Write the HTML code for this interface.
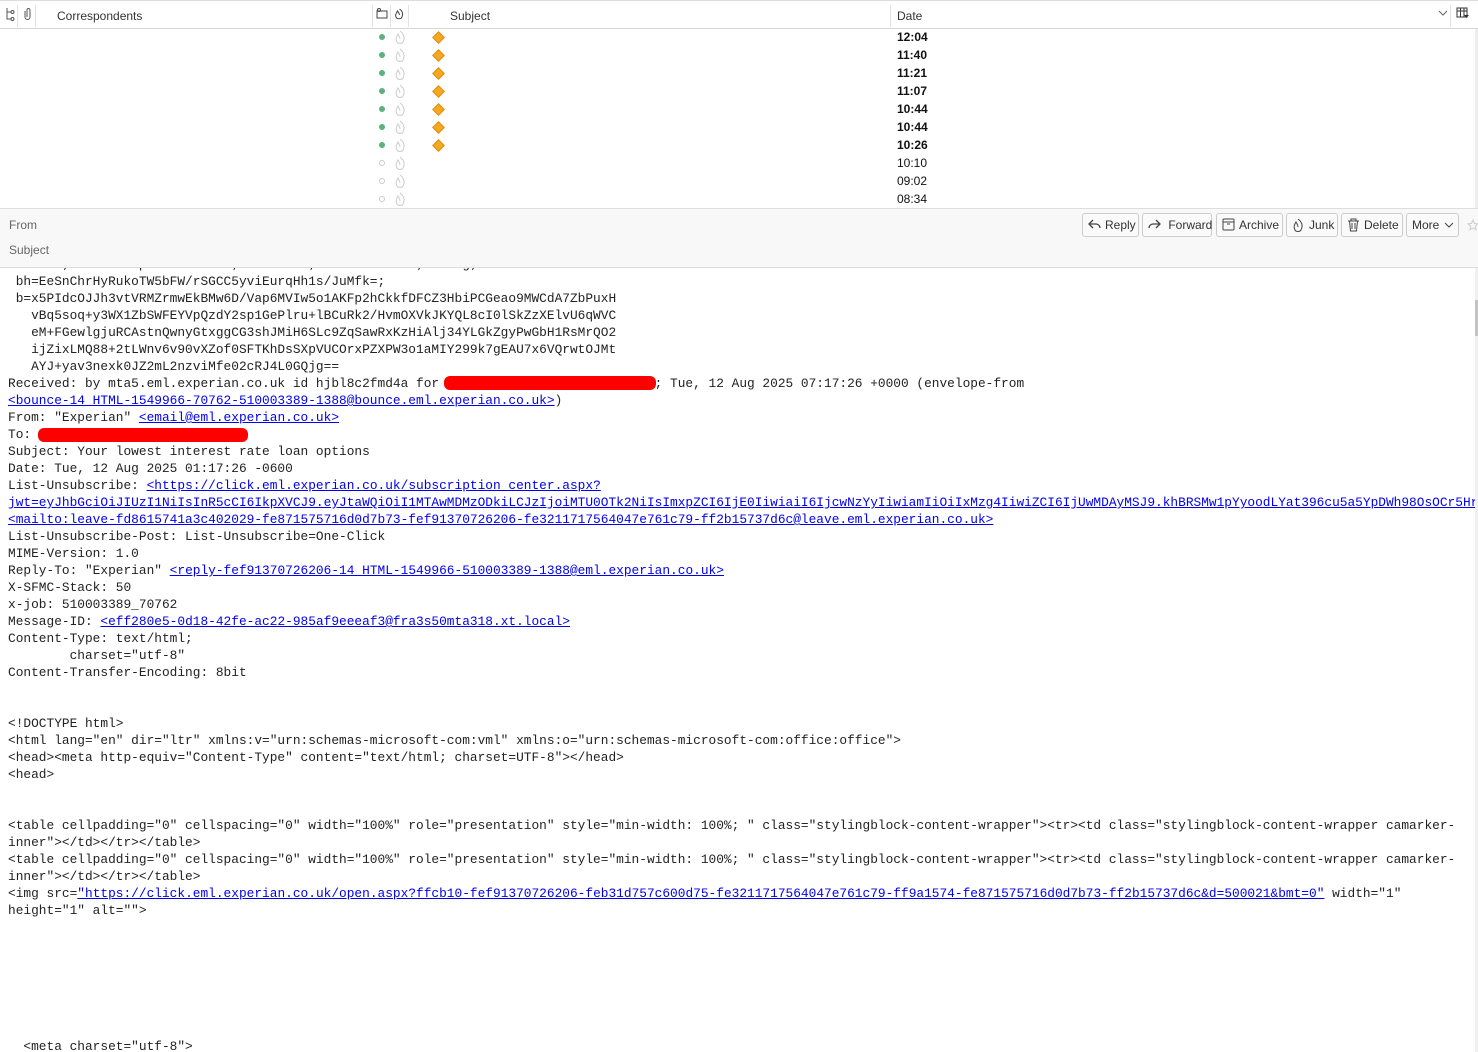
<!DOCTYPE html>
<html><head><meta charset="utf-8"><style>
*{margin:0;padding:0;box-sizing:border-box}
body{width:1478px;height:1052px;overflow:hidden;background:#fff;position:relative;font-family:"Segoe UI","Liberation Sans",sans-serif;}
.hdr{position:absolute;left:0;top:0;width:1478px;height:29px;border-top:1px solid #ddd;border-bottom:1px solid #d6d6d6;background:#fff;font-size:12px;color:#333}
.hdr span{position:absolute;top:8px}
.sep{position:absolute;top:4px;width:1px;height:22px;background:#e2e2e2}
.row{position:absolute;left:0;width:1475px;height:18px}
.dot{position:absolute;left:379px;top:5px;width:6px;height:6px;border-radius:50%;background:#5cb27a}
.dot.g{background:none;border:1px solid #ccc}
.fl{position:absolute;left:394px;top:1px}
.star{position:absolute;left:434px;top:4px;width:9px;height:9px;background:#f6a821;transform:rotate(45deg);border:1px solid #e48a10}
.time{position:absolute;left:897px;top:1px;font-size:12px;color:#111}
.b{font-weight:bold}
.ph{position:absolute;left:0;top:208px;width:1478px;height:60px;background:#f8f8f8;border-top:1px solid #ddd;border-bottom:1px solid #ddd;font-size:12px;color:#666}
.btn{position:absolute;top:4px;height:24px;border:1px solid #ccc;border-radius:3px;background:#fafafa;font-size:12px;color:#333;line-height:22px;padding-left:22px}
.btn svg{position:absolute;left:5px;top:4px}
pre{position:absolute;left:8px;top:254px;font-family:"Liberation Mono",monospace;font-size:12.83px;line-height:17px;color:#222;white-space:pre}
.bodyclip{position:absolute;left:0;top:268px;width:1475px;height:784px;overflow:hidden}
a{color:#0000ee;text-decoration:underline}
.red{position:absolute;background:#f00;border-radius:6px}
</style></head><body>
<div class="hdr">
<span style="left:5px;top:6px"><svg width="10" height="14"><path d="M2 1v11h4M2 5h4" stroke="#555" fill="none"/><circle cx="7.5" cy="5" r="1.5" fill="none" stroke="#555"/><circle cx="7.5" cy="12" r="1.5" fill="none" stroke="#555"/></svg></span>
<div class="sep" style="left:17px"></div>
<span style="left:23px;top:6px"><svg width="9" height="14"><path d="M2 4v6a2.5 2.5 0 0 0 5 0V3a1.5 1.5 0 0 0-3 0v7" stroke="#555" fill="none"/></svg></span>
<div class="sep" style="left:35px"></div>
<span style="left:57px">Correspondents</span>
<div class="sep" style="left:372px"></div>
<span style="left:376px;top:7px"><svg width="12" height="12"><rect x="1" y="3" width="10" height="7" fill="none" stroke="#444"/><circle cx="3" cy="2" r="1.5" fill="none" stroke="#444"/></svg></span>
<div class="sep" style="left:390px"></div>
<span style="left:394px;top:7px"><svg width="11" height="12"><path d="M5.5 1c3 2 4 5 2 9-1 1-4 1-5 0-2-3 0-5 1-7 1 2 2 2 2 4" stroke="#444" fill="none"/></svg></span>
<div class="sep" style="left:408px"></div>
<span style="left:450px">Subject</span>
<div class="sep" style="left:890px"></div>
<span style="left:897px">Date</span>
<span style="left:1438px;top:6px"><svg width="10" height="10"><path d="M1 3l4 4 4-4" stroke="#666" fill="none"/></svg></span>
<div class="sep" style="left:1450px"></div>
<span style="left:1456px;top:6px"><svg width="13" height="12"><rect x="1" y="1" width="10" height="9" fill="none" stroke="#333"/><path d="M1 4h10M4.5 1v9M8 1v9" stroke="#333"/><path d="M8 8h5l-2.5 3z" fill="#333"/></svg></span>
</div>
<div style="position:absolute;left:1475px;top:29px;width:3px;height:179px;background:#eee"></div>

<div class="row" style="top:29px"><div class="dot"></div><svg class="fl" width="12" height="16"><path d="M6 1c4 3 5 7 3 11-1 2-5 2-6 0-2-4 0-6 1-8 1 2 2 3 2 5" stroke="#ccc" fill="none"/></svg><div class="star"></div><div class="time b">12:04</div></div>
<div class="row" style="top:47px"><div class="dot"></div><svg class="fl" width="12" height="16"><path d="M6 1c4 3 5 7 3 11-1 2-5 2-6 0-2-4 0-6 1-8 1 2 2 3 2 5" stroke="#ccc" fill="none"/></svg><div class="star"></div><div class="time b">11:40</div></div>
<div class="row" style="top:65px"><div class="dot"></div><svg class="fl" width="12" height="16"><path d="M6 1c4 3 5 7 3 11-1 2-5 2-6 0-2-4 0-6 1-8 1 2 2 3 2 5" stroke="#ccc" fill="none"/></svg><div class="star"></div><div class="time b">11:21</div></div>
<div class="row" style="top:83px"><div class="dot"></div><svg class="fl" width="12" height="16"><path d="M6 1c4 3 5 7 3 11-1 2-5 2-6 0-2-4 0-6 1-8 1 2 2 3 2 5" stroke="#ccc" fill="none"/></svg><div class="star"></div><div class="time b">11:07</div></div>
<div class="row" style="top:101px"><div class="dot"></div><svg class="fl" width="12" height="16"><path d="M6 1c4 3 5 7 3 11-1 2-5 2-6 0-2-4 0-6 1-8 1 2 2 3 2 5" stroke="#ccc" fill="none"/></svg><div class="star"></div><div class="time b">10:44</div></div>
<div class="row" style="top:119px"><div class="dot"></div><svg class="fl" width="12" height="16"><path d="M6 1c4 3 5 7 3 11-1 2-5 2-6 0-2-4 0-6 1-8 1 2 2 3 2 5" stroke="#ccc" fill="none"/></svg><div class="star"></div><div class="time b">10:44</div></div>
<div class="row" style="top:137px"><div class="dot"></div><svg class="fl" width="12" height="16"><path d="M6 1c4 3 5 7 3 11-1 2-5 2-6 0-2-4 0-6 1-8 1 2 2 3 2 5" stroke="#ccc" fill="none"/></svg><div class="star"></div><div class="time b">10:26</div></div>
<div class="row" style="top:155px"><div class="dot g"></div><svg class="fl" width="12" height="16"><path d="M6 1c4 3 5 7 3 11-1 2-5 2-6 0-2-4 0-6 1-8 1 2 2 3 2 5" stroke="#ccc" fill="none"/></svg><div class="time">10:10</div></div>
<div class="row" style="top:173px"><div class="dot g"></div><svg class="fl" width="12" height="16"><path d="M6 1c4 3 5 7 3 11-1 2-5 2-6 0-2-4 0-6 1-8 1 2 2 3 2 5" stroke="#ccc" fill="none"/></svg><div class="time">09:02</div></div>
<div class="row" style="top:191px;height:16px;overflow:hidden"><div class="dot g"></div><svg class="fl" width="12" height="16"><path d="M6 1c4 3 5 7 3 11-1 2-5 2-6 0-2-4 0-6 1-8 1 2 2 3 2 5" stroke="#ccc" fill="none"/></svg><div class="time">08:34</div></div>

<div class="ph">
<span style="position:absolute;left:9px;top:9px">From</span>
<span style="position:absolute;left:9px;top:34px">Subject</span>
<div class="btn" style="left:1082px;width:57px"><svg width="13" height="13"><path d="M5 2L1 6l4 4M1 6h7a4 4 0 0 1 4 4" stroke="#444" fill="none" stroke-width="1.3"/></svg>Reply</div>
<div class="btn" style="left:1142px;width:70px"><svg width="13" height="13"><path d="M8 2l4 4-4 4M12 6H5a4 4 0 0 0-4 4" stroke="#444" fill="none" stroke-width="1.3"/></svg>&nbsp;Forward</div>
<div class="btn" style="left:1216px;width:67px"><svg width="13" height="13"><rect x="1" y="1" width="11" height="11" rx="1" fill="none" stroke="#444"/><path d="M1 4h11M5 6h3" stroke="#444"/></svg>Archive</div>
<div class="btn" style="left:1286px;width:52px"><svg width="12" height="14"><path d="M6 1c4 3 5 7 3 11-1 2-5 2-6 0-2-4 0-6 1-8 1 2 2 3 2 5" stroke="#444" fill="none"/></svg>Junk</div>
<div class="btn" style="left:1341px;width:62px"><svg width="13" height="14"><path d="M1 3h11M4 3V1h5v2M2.5 3l1 10h6l1-10M5 5v6M8 5v6" stroke="#444" fill="none"/></svg>Delete</div>
<div class="btn" style="left:1406px;width:53px;padding-left:5px">More <svg width="10" height="10" style="left:37px;top:7px"><path d="M1 2l4 4 4-4" stroke="#444" fill="none"/></svg></div>
<svg style="position:absolute;left:1467px;top:10px" width="12" height="12"><path d="M6 1l1.5 3.5 3.5.3-2.7 2.4.8 3.6L6 9 2.9 10.8l.8-3.6L1 4.8l3.5-.3z" fill="none" stroke="#ccc"/></svg>
</div>

<div class="bodyclip"><pre style="top:-12px">   dkim; d=eml.experian.co.uk; s=200608; t=1754983046; bh=lg;
 bh=EeSnChrHyRukoTW5bFW/rSGCC5yviEurqHh1s/JuMfk=;
 b=x5PIdcOJJh3vtVRMZrmwEkBMw6D/Vap6MVIw5o1AKFp2hCkkfDFCZ3HbiPCGeao9MWCdA7ZbPuxH
   vBq5soq+y3WX1ZbSWFEYVpQzdY2sp1GePlru+lBCuRk2/HvmOXVkJKYQL8cI0lSkZzXElvU6qWVC
   eM+FGewlgjuRCAstnQwnyGtxggCG3shJMiH6SLc9ZqSawRxKzHiAlj34YLGkZgyPwGbH1RsMrQO2
   ijZixLMQ88+2tLWnv6v90vXZof0SFTKhDsSXpVUCOrxPZXPW3o1aMIY299k7gEAU7x6VQrwtOJMt
   AYJ+yav3nexk0JZ2mL2nzviMfe02cRJ4L0GQjg==
Received: by mta5.eml.experian.co.uk id hjbl8c2fmd4a for xxxxxxxxxxxxxxxxxxxxxxxxxxx; Tue, 12 Aug 2025 07:17:26 +0000 (envelope-from
<a>&lt;bounce-14_HTML-1549966-70762-510003389-1388@bounce.eml.experian.co.uk&gt;</a>)
From: "Experian" <a>&lt;email@eml.experian.co.uk&gt;</a>
To: 
Subject: Your lowest interest rate loan options
Date: Tue, 12 Aug 2025 01:17:26 -0600
List-Unsubscribe: <a>&lt;https://click.eml.experian.co.uk/subscription_center.aspx?</a>
<a>jwt=eyJhbGciOiJIUzI1NiIsInR5cCI6IkpXVCJ9.eyJtaWQiOiI1MTAwMDMzODkiLCJzIjoiMTU0OTk2NiIsImxpZCI6IjE0IiwiaiI6IjcwNzYyIiwiamIiOiIxMzg4IiwiZCI6IjUwMDAyMSJ9.khBRSMw1pYyoodLYat396cu5a5YpDWh98OsOCr5Hr</a>
<a>&lt;mailto:leave-fd8615741a3c402029-fe871575716d0d7b73-fef91370726206-fe3211717564047e761c79-ff2b15737d6c@leave.eml.experian.co.uk&gt;</a>
List-Unsubscribe-Post: List-Unsubscribe=One-Click
MIME-Version: 1.0
Reply-To: "Experian" <a>&lt;reply-fef91370726206-14_HTML-1549966-510003389-1388@eml.experian.co.uk&gt;</a>
X-SFMC-Stack: 50
x-job: 510003389_70762
Message-ID: <a>&lt;eff280e5-0d18-42fe-ac22-985af9eeeaf3@fra3s50mta318.xt.local&gt;</a>
Content-Type: text/html;
        charset="utf-8"
Content-Transfer-Encoding: 8bit


&lt;!DOCTYPE html&gt;
&lt;html lang="en" dir="ltr" xmlns:v="urn:schemas-microsoft-com:vml" xmlns:o="urn:schemas-microsoft-com:office:office"&gt;
&lt;head&gt;&lt;meta http-equiv="Content-Type" content="text/html; charset=UTF-8"&gt;&lt;/head&gt;
&lt;head&gt;


&lt;table cellpadding="0" cellspacing="0" width="100%" role="presentation" style="min-width: 100%; " class="stylingblock-content-wrapper"&gt;&lt;tr&gt;&lt;td class="stylingblock-content-wrapper camarker-
inner"&gt;&lt;/td&gt;&lt;/tr&gt;&lt;/table&gt;
&lt;table cellpadding="0" cellspacing="0" width="100%" role="presentation" style="min-width: 100%; " class="stylingblock-content-wrapper"&gt;&lt;tr&gt;&lt;td class="stylingblock-content-wrapper camarker-
inner"&gt;&lt;/td&gt;&lt;/tr&gt;&lt;/table&gt;
&lt;img src=<a>"https://click.eml.experian.co.uk/open.aspx?ffcb10-fef91370726206-feb31d757c600d75-fe3211717564047e761c79-ff9a1574-fe871575716d0d7b73-ff2b15737d6c&amp;d=500021&amp;bmt=0"</a> width="1"
height="1" alt=""&gt;







  &lt;meta charset="utf-8"&gt;
</pre>
<div class="red" style="left:444px;top:108px;width:212px;height:14px"></div>
<div class="red" style="left:38px;top:160px;width:210px;height:14px"></div>
</div>
<div style="position:absolute;left:1475px;top:268px;width:3px;height:784px;background:#f0f0f0"></div>
<div style="position:absolute;left:1475px;top:300px;width:3px;height:36px;background:#c4c4c4"></div>
</body></html>
